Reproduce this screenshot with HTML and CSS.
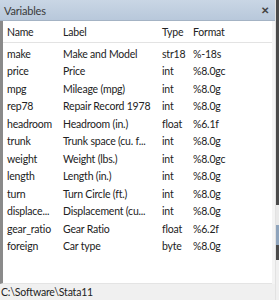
FILE: index.html
```html
<!DOCTYPE html>
<html lang="en">
<head>
  <meta charset="UTF-8">
  <title>Variables</title>
  <link rel="stylesheet" href="styles.css">
</head>
<body>
  <div class="window">
    <div class="pane">
      <div class="titlebar">
        <span class="title">Variables</span>
        <span class="close">&#x2715;</span>
      </div>
      <div class="list">
        <table class="vars">
          <colgroup>
            <col class="c-name"><col class="c-label"><col class="c-type"><col>
          </colgroup>
          <thead>
            <tr><th>Name</th><th>Label</th><th>Type</th><th>Format</th></tr>
          </thead>
          <tbody>
            <tr><td>make</td><td>Make and Model</td><td>str18</td><td>%-18s</td></tr>
            <tr><td>price</td><td>Price</td><td>int</td><td>%8.0gc</td></tr>
            <tr><td>mpg</td><td>Mileage (mpg)</td><td>int</td><td>%8.0g</td></tr>
            <tr><td>rep78</td><td>Repair Record 1978</td><td>int</td><td>%8.0g</td></tr>
            <tr><td>headroom</td><td>Headroom (in.)</td><td>float</td><td>%6.1f</td></tr>
            <tr><td>trunk</td><td>Trunk space (cu. f...</td><td>int</td><td>%8.0g</td></tr>
            <tr><td>weight</td><td>Weight (lbs.)</td><td>int</td><td>%8.0gc</td></tr>
            <tr><td>length</td><td>Length (in.)</td><td>int</td><td>%8.0g</td></tr>
            <tr><td>turn</td><td>Turn Circle (ft.)</td><td>int</td><td>%8.0g</td></tr>
            <tr><td>displace...</td><td>Displacement (cu...</td><td>int</td><td>%8.0g</td></tr>
            <tr><td>gear_ratio</td><td>Gear Ratio</td><td>float</td><td>%6.2f</td></tr>
            <tr><td>foreign</td><td>Car type</td><td>byte</td><td>%8.0g</td></tr>
          </tbody>
        </table>
      </div>
      <div class="status">C:\Software\Stata11</div>
    </div>
    <div class="edge">
      <div class="edge-dark"></div>
      <div class="edge-light"></div>
      <div class="edge-blue"></div>
      <div class="edge-dark short"></div>
      <div class="edge-rest"></div>
    </div>
  </div>
</body>
</html>
```

FILE: styles.css
```css
body {
  margin: 0;
  font-family: Lato, "Noto Sans", sans-serif;
  font-size: 10.5px;
  letter-spacing: -0.2px;
  color: #222;
  background: #f0f0f0;
}

.window {
  display: flex;
  width: 279px;
  height: 300px;
}

.pane {
  flex: 1;
  display: flex;
  flex-direction: column;
  border-right: 1px solid #e2e2e2;
  background: #f4f4f4;
}

.titlebar {
  height: 20px;
  display: flex;
  align-items: center;
  justify-content: space-between;
  padding: 0 6px 0 4px;
  background: linear-gradient(#c9d6e5, #b8c8db);
  border-bottom: 1px solid #a4b3c4;
  color: #3a3a3a;
  font-size: 11px;
}

.close {
  font-size: 10px;
  font-weight: bold;
  color: #444;
}

.list {
  height: 262px;
  background: #fff;
  border-left: 3px solid #8a8a8a;
  margin-right: 3px;
  border-bottom: 1px solid #e4e4e4;
}

.vars {
  border-collapse: collapse;
  table-layout: fixed;
  width: 100%;
}

.c-name { width: 56px; }
.c-label { width: 99px; }
.c-type { width: 31px; }

.vars th {
  font-weight: normal;
  text-align: left;
  height: 21px;
  border-bottom: 1px solid #e3e3e3;
  padding: 0 0 0 4px;
}

.vars td {
  height: 17.5px;
  padding: 0 0 0 4px;
  white-space: nowrap;
  overflow: hidden;
}

.vars tbody tr:first-child td {
  padding-top: 2px;
}

.status {
  flex: 1;
  display: flex;
  align-items: center;
  padding-left: 1px;
  background: #f0f0f0;
}

.edge {
  width: 3px;
  display: flex;
  flex-direction: column;
}

.edge-dark { height: 205px; background: #4a4a4a; }
.edge-light { height: 20px; background: #e8e8e8; }
.edge-blue { height: 20px; background: #8ea3bb; }
.edge-dark.short { height: 15px; background: #4a4a4a; }
.edge-rest { flex: 1; background: #f0f0f0; }
```
